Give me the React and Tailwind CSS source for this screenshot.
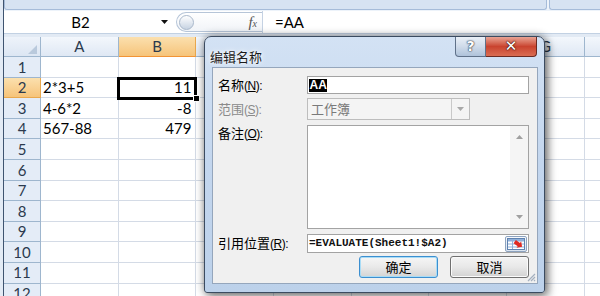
import React from "react";

const COLS = ["A", "B", "C", "D", "E", "F", "G", "H"];
const HIDDEN = ["C", "D", "E", "F", "H"];
const ROWS = [1, 2, 3, 4, 5, 6, 7, 8, 9, 10, 11, 12];
const DATA = { 2: ["2*3+5", "11"], 3: ["4-6*2", "-8"], 4: ["567-88", "479"] };

const sheetFont = "font-['Lato','Liberation_Sans',sans-serif]";
const cjk = "font-['Noto_Sans_CJK_SC',sans-serif]";

function Hotkey({ k }) {
  return (
    <span className="font-['Liberation_Sans',sans-serif] text-[12px] tracking-[-0.5px]">
      (<span className="underline">{k}</span>):
    </span>
  );
}

function Label({ text, k, muted }) {
  return (
    <div className={`w-[89px] shrink-0 text-[13px] leading-[13px] ${cjk} ${muted ? "text-[#8a8a8a]" : "text-black"}`}>
      {text}
      <Hotkey k={k} />
    </div>
  );
}

function CollapseIcon() {
  return (
    <svg width="20" height="14" viewBox="0 0 20 14">
      <rect x="1.5" y="1.5" width="17" height="11" fill="#fff" stroke="#5f82b0" />
      <rect x="2" y="2" width="16" height="2.5" fill="#8fb0da" />
      <line x1="2" y1="7" x2="18" y2="7" stroke="#8fb0da" />
      <line x1="2" y1="10" x2="18" y2="10" stroke="#8fb0da" />
      <line x1="6.5" y1="2" x2="6.5" y2="12" stroke="#8fb0da" />
      <path d="M8 5 L13 5 L13 3 L17 7 L13 11 L13 9 L8 9 Z" fill="#e02a22" transform="rotate(35 12 7)" />
    </svg>
  );
}

function Dialog() {
  return (
    <div className="absolute left-[204px] top-[36px] w-[341px] h-[257px] flex flex-col border border-[#3b4b60] rounded-t-[7px] rounded-b-[3px] bg-gradient-to-b from-[#d3e2f4] via-[#c3d6ee] to-[#bcd1ea] shadow-[0_0_9px_rgba(0,0,0,0.45),4px_4px_8px_rgba(0,0,0,0.35)]">
      <div className="h-[30px] shrink-0 flex items-center pl-[5px] pt-[9px] relative">
        <span className={`${cjk} text-[13px] text-[#1b1b1b] [text-shadow:0_0_6px_#fff,0_0_3px_#fff]`}>编辑名称</span>
        <div className="absolute top-0 right-[7px] flex h-[20px]">
          <div className="w-[31px] h-full flex items-center justify-center border border-t-0 border-[#5f7189] rounded-bl-[4px] bg-gradient-to-b from-[#eaf0f7] via-[#cfdbea] to-[#aec2da]">
            <span className="font-['DejaVu_Sans',sans-serif] font-bold text-[14px] text-white [text-shadow:0_0_1px_#3a4656,0_0_1px_#3a4656,0_0_2px_#3a4656]">?</span>
          </div>
          <div className="w-[51px] h-full flex items-center justify-center border border-t-0 border-l-0 border-[#6a2a22] rounded-br-[4px] bg-gradient-to-b from-[#e8a394] via-[#c9432f] to-[#da6c52]">
            <span className="font-['DejaVu_Sans',sans-serif] font-bold text-[15px] text-white [text-shadow:0_0_1px_#4a1610,0_0_1px_#4a1610,0_0_2px_#4a1610]">✕</span>
          </div>
        </div>
      </div>

      <div className="ml-[7px] mr-[6px] h-[217px] shrink-0 border border-[#95a6bc] bg-[#f0f0f0] flex flex-col relative">
        <div className="mt-[8px] h-[18px] flex items-center pl-[5px]">
          <Label text="名称" k="N" />
          <div className="w-[222px] h-full border border-[#a3a3a3] bg-white flex items-center pl-[1px]">
            <span className="bg-black text-white font-['Liberation_Sans',sans-serif] font-bold text-[12px] leading-[13px] px-[0.5px]">AA</span>
          </div>
        </div>

        <div className="mt-[4px] h-[22px] flex items-center pl-[5px]">
          <Label text="范围" k="S" muted />
          <div className="w-[163px] h-full border border-[#bdbdbd] bg-[#f4f4f4] flex items-center">
            <span className={`flex-1 pl-[3px] ${cjk} text-[13px] text-[#7a7a7a]`}>工作簿</span>
            <div className="w-[18px] h-full border-l border-[#c9c9c9] flex items-center justify-center">
              <svg width="7" height="4" viewBox="0 0 7 4"><path d="M0 0 L7 0 L3.5 4 Z" fill="#a8a8a8" /></svg>
            </div>
          </div>
        </div>

        <div className="mt-[5px] h-[104px] flex items-start pl-[5px]">
          <div className="pt-[1px]"><Label text="备注" k="O" /></div>
          <div className="w-[222px] h-full border border-[#a3a3a3] bg-white flex justify-end">
            <div className="w-[18px] h-full bg-[#f5f5f5] flex flex-col items-center justify-between py-[9px]">
              <svg width="7" height="4" viewBox="0 0 7 4"><path d="M0 4 L7 4 L3.5 0 Z" fill="#a0a0a0" /></svg>
              <svg width="7" height="4" viewBox="0 0 7 4"><path d="M0 0 L7 0 L3.5 4 Z" fill="#a0a0a0" /></svg>
            </div>
          </div>
        </div>

        <div className="mt-[5px] h-[19px] flex items-center pl-[5px]">
          <Label text="引用位置" k="R" />
          <div className="w-[222px] h-full border border-[#a3a3a3] bg-white flex items-center pl-[1px] pr-[1px]">
            <span className="flex-1 font-['Liberation_Mono',monospace] font-bold text-[11px] text-[#111]">=EVALUATE(Sheet1!$A2)</span>
            <div className="w-[22px] h-[16px] border border-[#8ea4c0] rounded-[2px] bg-gradient-to-b from-[#f7f9fc] to-[#d9e3ef] flex items-center justify-center">
              <CollapseIcon />
            </div>
          </div>
        </div>

        <div className="mt-[3px] h-[22px] flex justify-end gap-[12px] pr-[8px]">
          <div className={`w-[79px] h-full rounded-[3px] border border-[#3c8fd0] shadow-[inset_0_0_0_1px_#a9dcf6] bg-gradient-to-b from-[#f6f6f6] via-[#e9e9e9] to-[#d4d4d4] flex items-center justify-center ${cjk} text-[13px]`}>确定</div>
          <div className={`w-[79px] h-full rounded-[3px] border border-[#707070] shadow-[inset_0_0_0_1px_#fbfbfb] bg-gradient-to-b from-[#f4f4f4] via-[#e8e8e8] to-[#d2d2d2] flex items-center justify-center ${cjk} text-[13px]`}>取消</div>
        </div>

        <svg className="absolute right-[1px] bottom-[1px]" width="9" height="9" viewBox="0 0 9 9">
          <path d="M8 1 L1 8 M8 4 L4 8 M8 7 L7 8" stroke="#a4b0bf" strokeWidth="1.2" />
        </svg>
      </div>
    </div>
  );
}

export default function App() {
  return (
    <div className={`w-[600px] h-[296px] relative overflow-hidden bg-white flex ${sheetFont}`}>
      <div className="w-[4px] shrink-0 bg-[#e3ebf5] border-r border-[#3f5470]" />
      <div className="flex-1 min-w-0 flex flex-col">
        <div className="h-[11px] shrink-0 flex bg-[#edf3fa]">
          <div className="h-[10px] w-[543px] bg-[#d7e3f2] border-b border-l border-r border-[#a6bcd9] rounded-b-[3px]" />
          <div className="h-[10px] flex-1 ml-[2px] bg-[#d7e3f2] border-b border-l border-[#a6bcd9] rounded-bl-[3px]" />
        </div>

        <div className="h-[22px] shrink-0 flex bg-white">
          <div className="w-[172px] flex items-center">
            <span className="flex-1 text-center pr-[4px] text-[15px] text-black">B2</span>
            <svg className="mr-[8px]" width="7" height="4" viewBox="0 0 7 4"><path d="M0 0 L7 0 L3.5 4 Z" fill="#111" /></svg>
          </div>
          <div className="w-[86px] my-[1px] rounded-l-full border border-r-0 border-[#b6c5d8] bg-gradient-to-b from-white to-[#f1f4f8] flex items-center justify-between pl-[2px] pr-[5px]">
            <div className="w-[15px] h-[15px] rounded-full border border-[#a9b8cb] bg-gradient-to-b from-white to-[#c7d3e2]" />
            <span className="font-['Liberation_Serif',serif] italic text-[15px] text-[#555]">f<span className="text-[10px]">x</span></span>
          </div>
          <div className="flex-1 border-l border-[#c5d2e3] pl-[12px] flex items-center text-[15px] text-black">=AA</div>
        </div>

        <div className="h-[4px] shrink-0 bg-[#e2eaf4] border-t border-[#c2d1e3]" />

        <div className="h-[20px] shrink-0 flex">
          <div className="w-[37px] shrink-0 bg-gradient-to-b from-[#eef3fa] to-[#dce6f3] border-r border-b border-[#9eb6ce] flex items-end justify-end pr-[3px] pb-[2px]">
            <svg width="9" height="9" viewBox="0 0 9 9"><path d="M9 0 L9 9 L0 9 Z" fill="#b9c9dc" /></svg>
          </div>
          {COLS.map((c) => (
            <div
              key={c}
              className={`w-[77.7px] shrink-0 border-r border-b flex items-center justify-center text-[15px] text-[#2b3a4e] ${
                c === "B"
                  ? "bg-gradient-to-b from-[#fbe0ae] to-[#f6c47a] border-[#e9a84e] border-b-[#f29436]"
                  : "bg-gradient-to-b from-[#f3f7fc] to-[#dfe8f4] border-[#9eb6ce]"
              }`}
            >
              {HIDDEN.includes(c) ? "" : c}
            </div>
          ))}
        </div>

        {ROWS.map((r) => (
          <div key={r} className="h-[20.6px] shrink-0 flex">
            <div
              className={`w-[37px] shrink-0 border-r border-b flex items-center justify-center text-[15px] text-[#2b3a4e] ${
                r === 2 ? "bg-gradient-to-b from-[#fbe0ae] to-[#f6c47a] border-[#e9a84e]" : "bg-[#e4ecf7] border-[#9eb6ce]"
              }`}
            >
              {r}
            </div>
            {COLS.map((c, i) => (
              <div
                key={c}
                className={`w-[77.7px] shrink-0 border-r border-b border-[#d4dbe6] flex items-center text-[15px] text-black ${
                  i === 1 ? "justify-end pr-[4px]" : "pl-[2px]"
                }`}
              >
                {DATA[r] && i < 2 ? DATA[r][i] : ""}
              </div>
            ))}
          </div>
        ))}
      </div>

      <div className="absolute left-[117px] top-[77px] w-[80px] h-[23px] border-[3px] border-black" />
      <div className="absolute left-[193px] top-[95px] w-[7px] h-[7px] bg-black border border-white" />

      <Dialog />
    </div>
  );
}
